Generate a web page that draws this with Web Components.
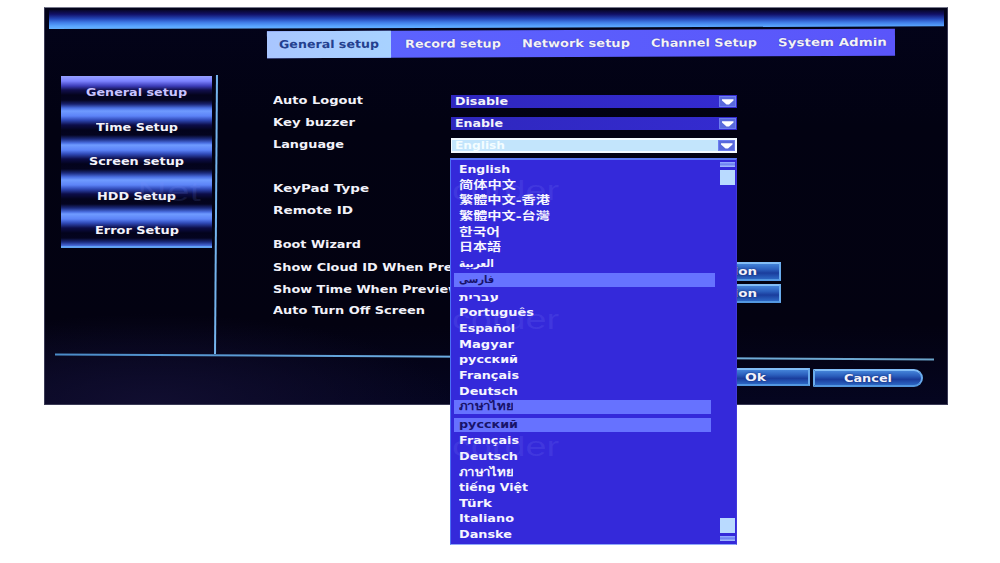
<!DOCTYPE html>
<html lang="en">
<head>
<meta charset="utf-8">
<title>General setup</title>
<style>
    html {
        height: 100%;
    }
    body {
        box-sizing: border-box;
        height: 563px;
        margin: 0;
        padding: 7px 0 0 44px;
        background: #fff;
        font-family: "DejaVu Sans", "Noto Sans CJK SC", "Noto Sans", sans-serif;
        font-size: 11px;
        font-weight: bold;
        color: #f2f2fa;
    }
</style>
</head>
<body>
<dvr-window>
    <tab-bar slot="tabs">
        <tab-item active><wide-text w="100">General setup</wide-text></tab-item>
        <tab-item><wide-text w="96">Record setup</wide-text></tab-item>
        <tab-item><wide-text w="108">Network setup</wide-text></tab-item>
        <tab-item><wide-text w="106">Channel Setup</wide-text></tab-item>
        <tab-item><wide-text w="109">System Admin</wide-text></tab-item>
    </tab-bar>

    <side-menu slot="menu">
        <side-item active><wide-text w="101">General setup</wide-text></side-item>
        <side-item><wide-text w="82">Time Setup</wide-text></side-item>
        <side-item><wide-text w="95">Screen setup</wide-text></side-item>
        <side-item><wide-text w="79">HDD Setup</wide-text></side-item>
        <side-item><wide-text w="84">Error Setup</wide-text></side-item>
    </side-menu>

    <form-row>
        <wide-text slot="label" w="90">Auto Logout</wide-text>
        <select-box><wide-text w="53">Disable</wide-text></select-box>
    </form-row>
    <form-row>
        <wide-text slot="label" w="82">Key buzzer</wide-text>
        <select-box><wide-text w="48">Enable</wide-text></select-box>
    </form-row>
    <form-row>
        <wide-text slot="label" w="71">Language</wide-text>
        <select-box open>
            <wide-text w="50">English</wide-text>
            <language-list slot="list"></language-list>
        </select-box>
    </form-row>
    <form-row></form-row>
    <form-row><wide-text slot="label" w="96">KeyPad Type</wide-text></form-row>
    <form-row><wide-text slot="label" w="80">Remote ID</wide-text></form-row>
    <form-row short></form-row>
    <form-row><wide-text slot="label" w="88">Boot Wizard</wide-text></form-row>
    <form-row>
        <wide-text slot="label" w="213">Show Cloud ID When Preview</wide-text>
        <push-button kind="option"><wide-text w="51">Option</wide-text></push-button>
    </form-row>
    <form-row>
        <wide-text slot="label" w="187">Show Time When Preview</wide-text>
        <push-button kind="option"><wide-text w="51">Option</wide-text></push-button>
    </form-row>
    <form-row><wide-text slot="label" w="152">Auto Turn Off Screen</wide-text></form-row>

    <push-button slot="actions"><wide-text w="21">Ok</wide-text></push-button>
    <push-button slot="actions" kind="last"><wide-text w="48">Cancel</wide-text></push-button>
</dvr-window>

<script>
function define(name, html, connected) {
    const template = document.createElement("template");
    template.innerHTML = html;
    customElements.define(name, class extends HTMLElement {
        constructor() {
            super();
            this.attachShadow({ mode: "open" });
            this.shadowRoot.appendChild(template.content.cloneNode(true));
        }

        connectedCallback() {
            if (connected) connected.call(this);
        }
    });
}

// Main frame: title bar, tabs, side menu, form and action buttons
define("dvr-window", `
    <style>
    :host {
        display: flex;
        flex-direction: column;
        box-sizing: border-box;
        width: 904px;
        height: 398px;
        padding: 2px 3px 0 4px;
        border: 1px solid #3a3a55;
        border-top-color: #77798c;
        background:
            radial-gradient(ellipse 300px 90px at 12% 100%, #110e30, transparent),
            linear-gradient(#03031a, #020212 30%, #030211 80%, #050520);
    }
    .title {
        flex: none;
        height: 19px;
        clip-path: polygon(0 0, 100% 0, 100% 86%, 0 100%);
        background: linear-gradient(#07062a, #111066 22%, #2343b4 45%, #3f7be6 65%, #59a5ff 85%, #69b4ff);
    }
    .main {
        display: flex;
        height: 280px;
        margin-top: 18px;
        padding-left: 12px;
    }
    .divider {
        width: 2px;
        height: 279px;
        margin-left: 3px;
        background: #75b5ee;
        transform: rotate(0.4deg);
    }
    .form {
        padding: 14px 0 0 56px;
    }
    .rule {
        width: 879px;
        height: 2px;
        margin: 1px 0 0 6px;
        background: linear-gradient(90deg, #4a8bc8, #75b5e8 55%, #6ba4ca);
        transform: rotate(0.34deg);
    }
    .actions {
        display: flex;
        justify-content: flex-end;
        gap: 3px;
        padding: 10px 21px 0 0;
    }
    </style>
    <div class="title"></div>
    <slot name="tabs"></slot>
    <div class="main">
        <slot name="menu"></slot>
        <div class="divider"></div>
        <div class="form"><slot></slot></div>
    </div>
    <div class="rule"></div>
    <div class="actions"><slot name="actions"></slot></div>
`);

define("tab-bar", `
    <style>
    :host {
        display: flex;
        gap: 21px;
        width: 628px;
        height: 27px;
        margin: 1px 0 0 218px;
        background: linear-gradient(90deg, #5c66ff, #5a55fa);
        transform: rotate(-0.22deg);
    }
    </style>
    <slot></slot>
`);

define("tab-item", `
    <style>
    :host {
        display: flex;
        align-items: center;
        text-shadow: 0 0 1px #2c2a9a;
    }
    :host([active]) {
        justify-content: center;
        width: 124px;
        margin-right: -7.5px;
        background: linear-gradient(90deg, #a9c6ff, #a8d2ff);
        color: #24408f;
        text-shadow: none;
    }
    </style>
    <slot></slot>
`);

define("side-menu", `
    <style>
    :host {
        display: flex;
        flex-direction: column;
        position: relative;
        width: 151px;
        height: 172px;
        margin-top: 1px;
        border-bottom: 2px solid #62a2f4;
        box-sizing: border-box;
    }
    .mark {
        position: absolute;
        left: 76px;
        top: 100px;
        font: 27px/32px "Liberation Sans", sans-serif;
        color: rgba(130, 150, 255, 0.13);
    }
    </style>
    <slot></slot>
    <wide-text class="mark" w="64">Net</wide-text>
`);

define("side-item", `
    <style>
    :host {
        display: flex;
        flex: none;
        justify-content: center;
        height: 34.5px;
        line-height: 33px;
        background: linear-gradient(#6f9bff, #5c83f7 5px, #304ab8 9px, #0c0d48 14px, #03031c 19px, #04041f 24px, #1b2a7c 28px, #4a6fe2 32px, #6f9bff);
    }
    :host(:last-of-type) {
        height: 32px;
    }
    :host([active]) {
        color: #c9c4ff;
        background: linear-gradient(#96a0ff, #7c82ff 5px, #3c3cb8 10px, #12104e 14px, #04031c 19px, #04041f 24px, #17206c 28px, #4a6fe2 32px, #6f9bff);
    }
    </style>
    <slot></slot>
`);

define("form-row", `
    <style>
    :host {
        display: grid;
        grid-template-columns: 178px auto;
        align-items: center;
        height: 22px;
    }
    :host([short]) {
        height: 12px;
    }
    </style>
    <div><slot name="label"></slot></div>
    <slot></slot>
`);

define("select-box", `
    <style>
    :host {
        display: flex;
        position: relative;
        align-items: center;
        justify-content: space-between;
        box-sizing: border-box;
        width: 286px;
        height: 13px;
        margin-top: 3px;
        padding: 0 1px 0 4px;
        background: linear-gradient(90deg, #2f27be, #342bd0);
    }
    :host([open]) {
        height: 15px;
        padding: 0 0 0 3px;
        border: 1px solid #f4fbff;
        border-width: 2px 2px 2px 1px;
        background: #c3e5fc;
        color: #f4fdff;
    }
    svg {
        display: block;
        flex: none;
    }
    ::slotted([slot="list"]) {
        position: absolute;
        left: -2px;
        top: 18px;
        z-index: 2;
    }
    </style>
    <slot></slot>
    <svg width="17" height="11" viewBox="0 0 17 11">
        <rect width="17" height="11" fill="#6c7df0"/>
        <rect x="1" y="1" width="15" height="9" fill="#5969dc"/>
        <path d="M3 3.2H14.5V4.4L10 8.4H7.5L3 4.4Z" fill="#fff"/>
    </svg>
    <slot name="list"></slot>
`);

define("push-button", `
    <style>
    :host {
        display: flex;
        align-items: center;
        justify-content: center;
        box-sizing: border-box;
        width: 110px;
        height: 18px;
        border: 2px solid #69abed;
        border-color: #82bdf6 #69abed #5397e0;
        background: linear-gradient(#4382d8, #2b5fbd 35%, #1a3d9d 60%, #2c66c3);
        text-shadow: 0 0 2px #10246c;
    }
    :host([kind="option"]) {
        width: 99px;
        height: 19px;
        margin: 7px 0 -2px 231px;
    }
    :host([kind="last"]) {
        margin-top: 1px;
        border-radius: 0 9px 9px 0;
    }
    </style>
    <slot></slot>
`);

define("language-option", `
    <style>
    :host {
        display: block;
        width: 261px;
        height: 15.67px;
        padding-left: 5px;
        box-sizing: border-box;
        line-height: 15.67px;
    }
    :host([marked]) {
        height: 14px;
        background: #6672ff;
        line-height: 13px;
        color: #18136a;
    }
    </style>
    <slot></slot>
`);

define("language-list", `
    <style>
    :host {
        display: flex;
        justify-content: space-between;
        box-sizing: border-box;
        width: 287px;
        height: 387px;
        padding: 2px 1px 3px 3px;
        border: 1px solid #4d70f5;
        border-top: 2px solid #5a77f5;
        border-right-color: #4238dc;
        border-bottom-color: #8fa8f8;
        background: #3429da;
        color: #f6f5ff;
    }
    .scroll {
        display: flex;
        flex-direction: column;
        gap: 3px;
        width: 15px;
    }
    .arrow {
        height: 5px;
        background: linear-gradient(#8fa6ff 1px, #6578f0 2px, #a9c2ff);
    }
    .thumb {
        height: 15px;
        background: #b9daff;
    }
    .thumb.end {
        margin-top: auto;
    }
    .mark {
        position: absolute;
        left: 1px;
        font: 27px/32px "Liberation Sans", sans-serif;
        color: rgba(150, 160, 255, 0.13);
    }
    </style>
    <div class="list"></div>
    <div class="scroll">
        <div class="arrow"></div>
        <div class="thumb"></div>
        <div class="thumb end"></div>
        <div class="arrow"></div>
    </div>
    <wide-text class="mark" w="107" style="top: 15px">corder</wide-text>
    <wide-text class="mark" w="107" style="top: 144px">corder</wide-text>
    <wide-text class="mark" w="107" style="top: 271px">corder</wide-text>
`, function () {
    // name, drawn width, extra style of the row
    const languages = [
        ["English", 51],
        ["简体中文", 57],
        ["繁體中文-香港", 91],
        ["繁體中文-台灣", 91],
        ["한국어", 41],
        ["日本語", 42],
        ["العربية", 35],
        ["فارسی", 35, "margin: 1px 0 3px"],
        ["עברית", 40],
        ["Português", 75],
        ["Español", 56],
        ["Magyar", 55],
        ["русский", 59],
        ["Français", 60],
        ["Deutsch", 59],
        ["ภาษาไทย", 54, "width: 257px; margin: 1px 0 4px"],
        ["русский", 59, "width: 257px; margin-bottom: 1px"],
        ["Français", 60],
        ["Deutsch", 59],
        ["ภาษาไทย", 54],
        ["tiếng Việt", 69],
        ["Türk", 33],
        ["Italiano", 55],
        ["Danske", 53]
    ];
    this.shadowRoot.querySelector(".list").innerHTML = languages.map(([name, w, style]) =>
        `<language-option ${style ? `marked style="${style}"` : ""}><wide-text w="${w}">${name}</wide-text></language-option>`
    ).join("");
});

// Text stretched horizontally to the width in the w attribute.
// Defined last so that its surroundings are styled when it measures itself.
define("wide-text", `
    <style>
    :host {
        display: inline-block;
        white-space: nowrap;
        vertical-align: top;
    }
    span {
        display: inline-block;
        transform-origin: 0 50%;
    }
    </style>
    <span><slot></slot></span>
`, function () {
    const span = this.shadowRoot.querySelector("span");
    const w = Number(this.getAttribute("w"));
    span.style.transform = "none";
    const natural = span.getBoundingClientRect().width;
    this.style.width = w + "px";
    span.style.transform = `scaleX(${w / natural})`;
});
</script>
</body>
</html>
